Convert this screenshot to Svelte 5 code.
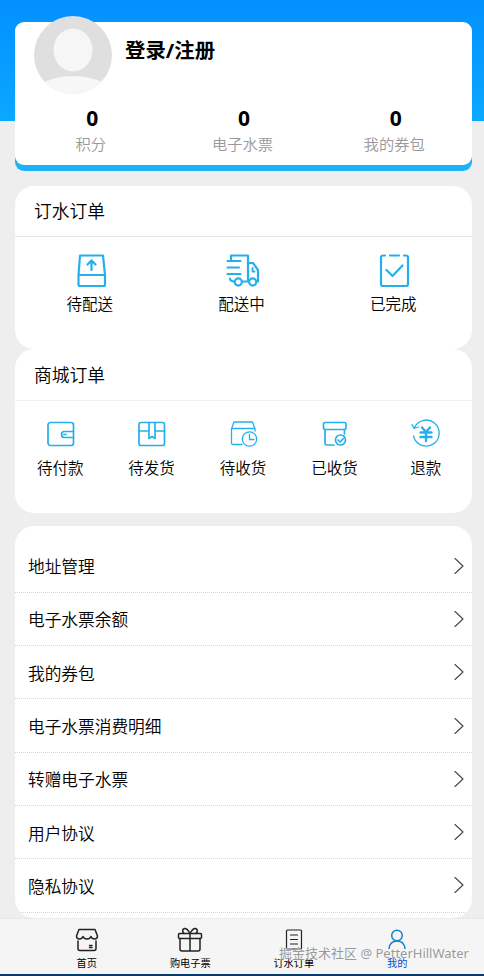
<script>
  const stats = ['积分', '电子水票', '我的券包'];
  const menu = ['地址管理', '电子水票余额', '我的券包', '电子水票消费明细', '转赠电子水票', '用户协议', '隐私协议'];
</script>

<main>
  <section class="profile">
    <div class="user">
      <svg class="avatar" width="78" height="78" viewBox="0 0 78 78">
        <defs><clipPath id="round"><circle cx="39" cy="39" r="39" /></clipPath></defs>
        <g clip-path="url(#round)">
          <rect width="78" height="78" fill="#dfdfdf" />
          <ellipse cx="39" cy="34" rx="19.5" ry="21.5" fill="#f6f6f6" />
          <path d="M7 68Q20 60 39 60T71 68V78H7Z" fill="#f7f7f7" />
        </g>
      </svg>
      <strong>登录/注册</strong>
    </div>
    <div class="stats">
      {#each stats as label}
        <div class="stat"><b>0</b><span>{label}</span></div>
      {/each}
    </div>
  </section>

  <section class="orders">
    <h2>订水订单</h2>
    <div class="items">
      <div class="item">
        <svg width="34" height="36" viewBox="0 0 34 36">
          <path d="M6 2.500H29L31 22V31.500Q31 33 29.500 33H6Q4.500 33 4.500 31.500V22ZM4.500 22H31M17.500 17V8M13.500 11.500L17.500 7.500L21.500 11.500" />
        </svg>
        <span>待配送</span>
      </div>
      <div class="item">
        <svg width="34" height="36" viewBox="0 0 34 36">
          <path d="M5 6.500V2.500H22V28.500H16M1.500 8H14.500M1.500 14.500H13M1.500 21H14.500M22 10H27L32 17V28.500H30.500M22 28.500H23M4 25.500Q4 28.500 8.500 28.500" />
          <circle cx="12.300" cy="29" r="3.600" /><circle cx="26.700" cy="29" r="3.600" />
          <path d="M26.500 15V18.500H28.500" stroke-width="1.800" />
        </svg>
        <span>配送中</span>
      </div>
      <div class="item">
        <svg width="34" height="36" viewBox="0 0 34 36">
          <path d="M8 2.500H6Q4 2.500 4 4.500V31Q4 33 6 33H29Q31 33 31 31V4.500Q31 2.500 29 2.500H27M13 2.500H22M9.500 17L15.500 23L25.500 12.500" />
        </svg>
        <span>已完成</span>
      </div>
    </div>
  </section>

  <section class="orders mall">
    <h2>商城订单</h2>
    <div class="items">
      <div class="item">
        <svg width="30" height="30" viewBox="0 0 30 30">
          <rect x="2" y="3.500" width="25.500" height="23" rx="2.500" />
          <path d="M27.500 12.500H18.500a3 3 0 0 0 0 6H27.500M18 15.500H20" />
        </svg>
        <span>待付款</span>
      </div>
      <div class="item">
        <svg width="30" height="30" viewBox="0 0 30 30">
          <rect x="2" y="3.500" width="25.500" height="23" rx="2" />
          <path d="M2 12H12M18 12H27.500M12 3.500V19.500L15 17.500L18 19.500V3.500" />
        </svg>
        <span>待发货</span>
      </div>
      <div class="item">
        <svg class="thin" width="30" height="30" viewBox="0 0 30 30">
          <path d="M13 25.500H4Q2.500 25.500 2.500 24V10L5 3H23.500L26 10V12M2.500 9.500H26" />
          <circle cx="20.500" cy="20" r="7.200" /><path d="M20.500 15.500V20.500H25" />
        </svg>
        <span>待收货</span>
      </div>
      <div class="item">
        <svg width="30" height="30" viewBox="0 0 30 30">
          <rect x="3.500" y="3.500" width="22.500" height="7" rx="1.500" />
          <path d="M5 10.500V24.500Q5 26 6.500 26H14M24.500 10.500V15" />
          <circle cx="20.500" cy="21" r="5" /><path d="M18 21L20 23L23.500 19.500" />
        </svg>
        <span>已收货</span>
      </div>
      <div class="item">
        <svg class="thin" width="30" height="30" viewBox="0 0 30 30">
          <path d="M3 9.500A13 13 0 1 1 2.500 17M1 5.500L3 9.500L7.500 8" />
          <path d="M11 8.500L15 13L19 8.500M9.500 13.500H20.500M9.500 18H20.500M15 13V22" stroke-width="2.400" />
        </svg>
        <span>退款</span>
      </div>
    </div>
  </section>

  <section class="menu">
    {#each menu as label}
      <div class="row">
        <span>{label}</span>
        <svg width="10" height="18" viewBox="0 0 10 18"><path d="M1 1.500L9 9L1 16.500" /></svg>
      </div>
    {/each}
  </section>

  <nav>
    <div class="tab">
      <svg width="26" height="26" viewBox="0 0 26 26">
        <path d="M5 2.500H21L23.500 9Q23.500 12 20.500 12Q18 12 17 9.500Q16 12 13 12Q10 12 9 9.500Q8 12 5.500 12Q2.500 12 2.500 9ZM4 14V21.500Q4 23.500 6 23.500H20Q22 23.500 22 21.500V14M15.500 18.500H18M15.500 20.500H18" />
      </svg>
      <span>首页</span>
    </div>
    <div class="tab">
      <svg width="26" height="26" viewBox="0 0 26 26">
        <rect x="1.500" y="6.500" width="23" height="5" rx="1" />
        <path d="M3 11.500V22Q3 24 5 24H21Q23 24 23 22V11.500M13 6.500V24M13 6.500Q10 1 7.500 1.500Q4 3 7 6.500M13 6.500Q16 1 18.500 1.500Q22 3 19 6.500" />
      </svg>
      <span>购电子票</span>
    </div>
    <div class="tab">
      <svg class="light" width="26" height="26" viewBox="0 0 26 26">
        <rect x="5.500" y="3" width="15" height="19" rx="1" />
        <path d="M9.500 8H16.500M9.500 12.500H16.500M9.500 17H16.500" />
      </svg>
      <span>订水订单</span>
    </div>
    <div class="tab active">
      <svg width="26" height="26" viewBox="0 0 26 26">
        <circle cx="13" cy="8.500" r="5.300" /><path d="M5 21.500Q6 14 13 14T21 21.500" />
      </svg>
      <span>我的</span>
    </div>
  </nav>
  <div class="watermark">掘金技术社区 @ PetterHillWater</div>
</main>

<style>
  :global(body) { margin: 0; overflow: hidden; }
  * { box-sizing: border-box; }
  main {
    position: relative;
    display: flex;
    flex-direction: column;
    height: 976px;
    padding: 22px 12px 0 15px;
    overflow: hidden;
    background: linear-gradient(#0290ff, #0ba8ff) 0 0 / 100% 121px no-repeat #eee;
    color: #000;
    font-family: "Noto Sans", "Noto Sans CJK SC", sans-serif;
    font-weight: 350;
  }
  section { flex: none; background: #fff; }
  .profile { height: 143px; border-radius: 9px; box-shadow: 0 6px 0 #1bb4f8; }
  .user { display: flex; height: 80px; padding-left: 19px; }
  .avatar { flex: none; margin-top: -6px; }
  .user strong { margin: 12px 0 0 13px; font-size: 20.4px; line-height: 32px; font-weight: 700; }
  .stats { display: flex; }
  .stat { flex: 1; display: flex; flex-direction: column; align-items: center; }
  .stat b { padding-left: 3px; font-size: 21px; line-height: 32px; font-weight: 700; }
  .stat span { margin-top: -2px; font-size: 15.3px; line-height: 24px; color: #999; }
  .stat:last-child { padding-right: 2px; }
  .orders { height: 164px; border-radius: 19px; }
  .profile + .orders { margin-top: 21px; height: 163px; }
  h2 {
    height: 51px;
    margin: 0;
    padding-left: 19px;
    border-bottom: 1px solid #e5e5e5;
    font-size: 17.8px;
    line-height: 51px;
    font-weight: 350;
  }
  .mall h2 { line-height: 53px; height: 52px; border-color: #f0f0f0; }
  .items { display: flex; padding-top: 16px; }
  .mall .items { padding-top: 18px; }
  .item { flex: 1; display: flex; flex-direction: column; align-items: center; }
  .item:nth-child(3):last-child { padding-right: 2px; }
  .item span { margin: 3px 2px 0 0; font-size: 15.5px; line-height: 24px; }
  .mall .item span { margin: 7px 1px 0 0; }
  svg { fill: none; stroke-linecap: round; stroke-linejoin: round; }
  .item svg { stroke: #25b0ec; stroke-width: 2.200; }
  .mall .item svg { stroke-width: 1.700; }
  .mall .item .thin { stroke-width: 1.300; }
  .menu { height: 392px; margin-top: 13px; padding-top: 13.500px; border-radius: 19px; overflow: hidden; }
  .row {
    display: flex;
    align-items: center;
    justify-content: space-between;
    height: 53.300px;
    padding: 0 8px 0 13px;
    border-bottom: 1px dotted #d4d4d4;
    font-size: 16.700px;
  }
  .row span { padding-top: 1px; }
  .row svg { stroke: #444; stroke-width: 1.1; }
  nav {
    display: flex;
    flex: none;
    height: 58px;
    margin: 0 -12px 0 -15px;
    padding: 8px 35px 0;
    background: #f5f5f5;
    border-top: 1px solid #e8e8e8;
    border-bottom: 2px solid #07396a;
  }
  .tab { flex: 1; display: flex; flex-direction: column; align-items: center; }
  .tab svg { flex: none; stroke: #222; stroke-width: 1.5; }
  .tab .light { stroke-width: 1.2; }
  .tab span { margin-top: 1px; font-size: 10.200px; line-height: 18px; font-weight: 400; }
  .active { color: #0650c8; }
  .active svg { stroke: #1883cc; }
  .watermark {
    position: absolute;
    right: 15px;
    bottom: 12px;
    color: #999;
    font-size: 13px;
    line-height: 22px;
    font-weight: 400;
    white-space: nowrap;
    text-shadow: 0 0 1px #fff;
  }
</style>
